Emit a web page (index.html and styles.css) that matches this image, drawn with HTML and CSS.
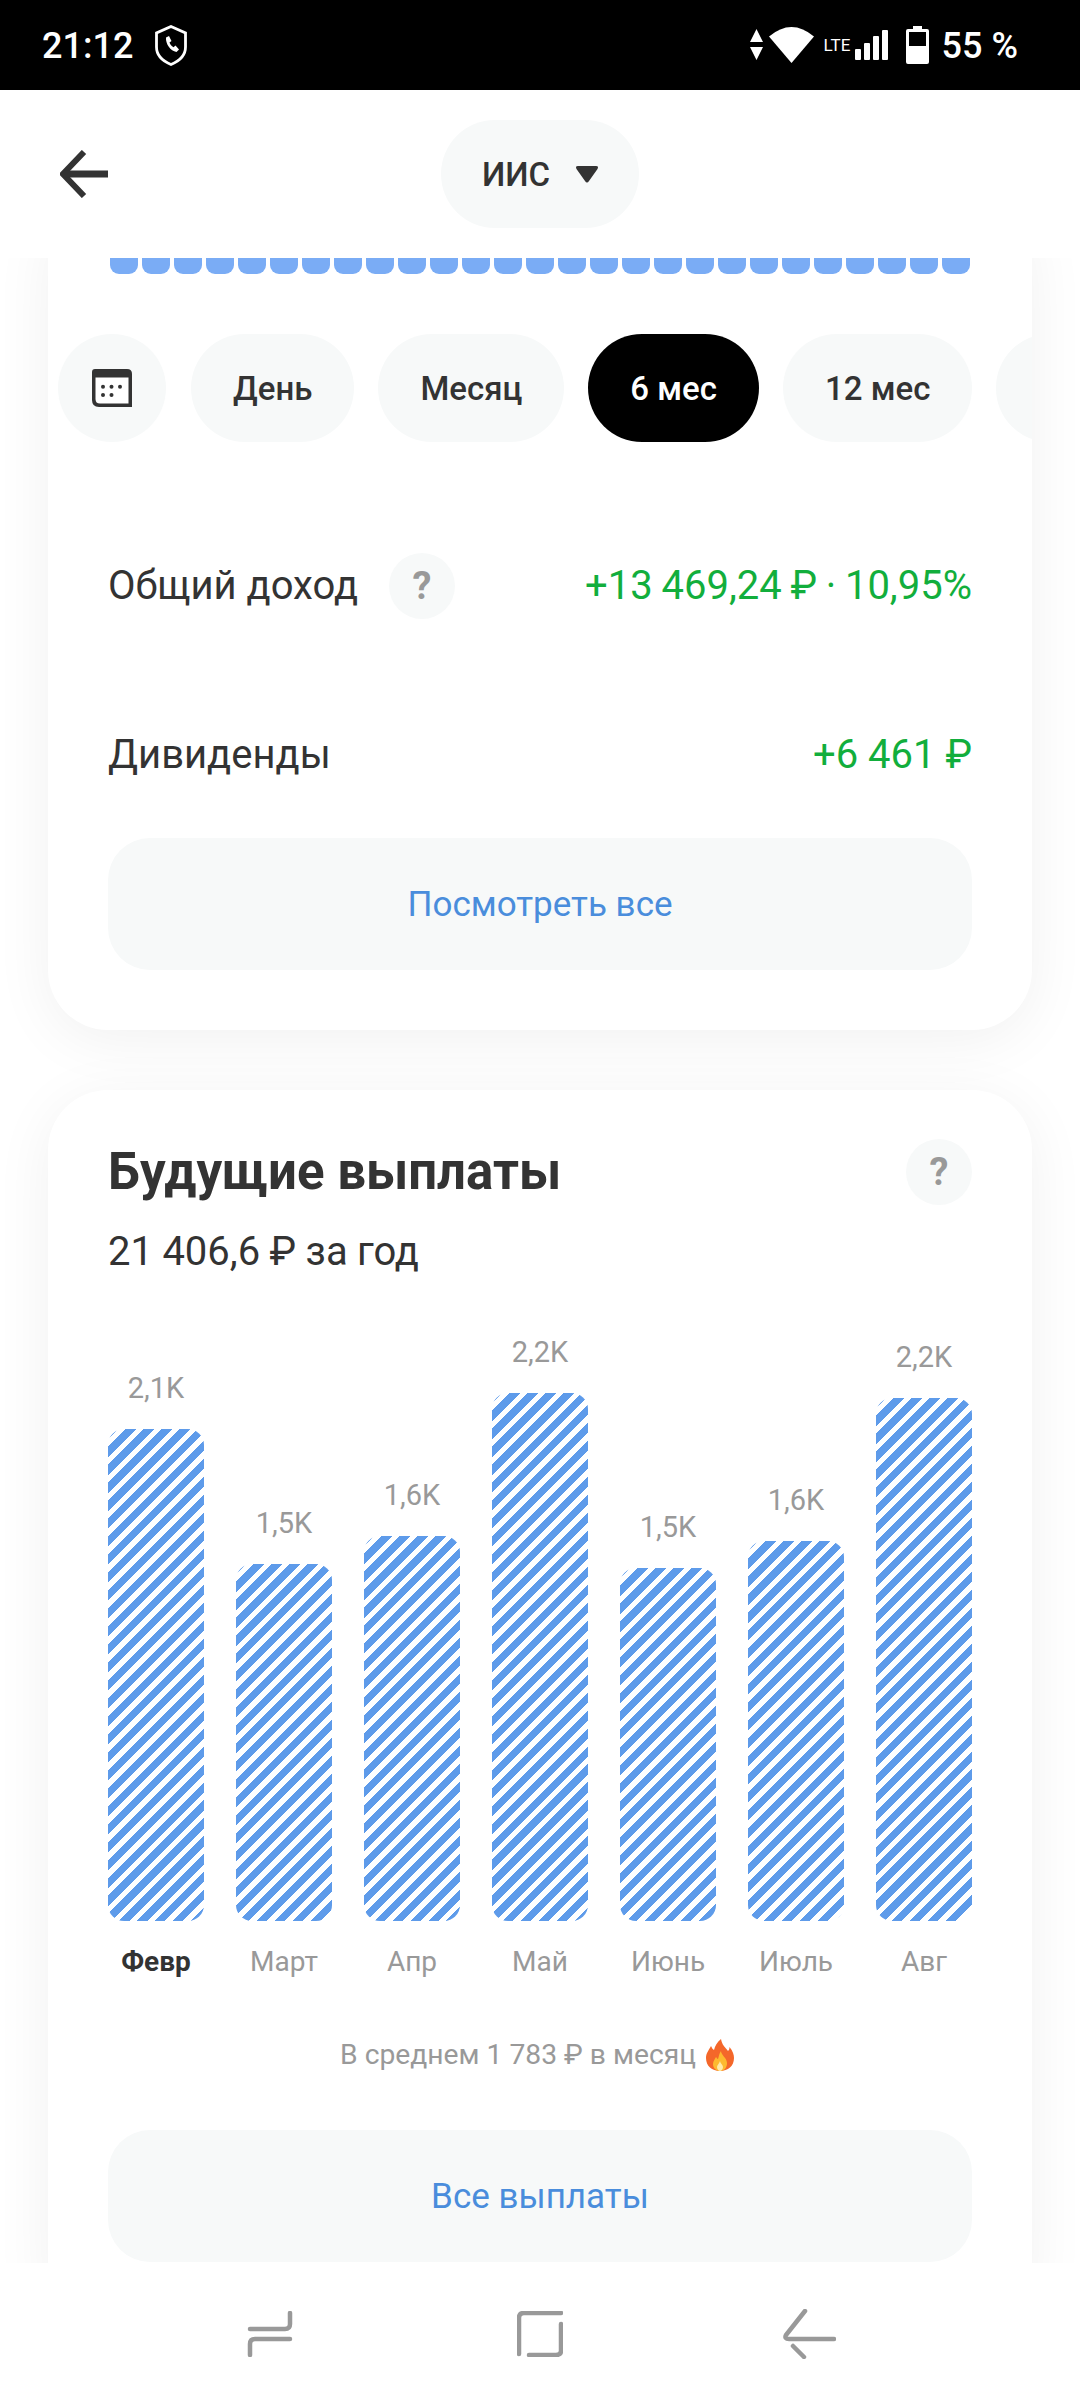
FILE: index.html
```html
<!DOCTYPE html>
<html lang="ru">
<head>
  <meta charset="UTF-8">
  <title>ИИС</title>
  <link rel="stylesheet" href="styles.css">
</head>
<body>
<div class="screen">

  <div class="status-bar">
    <div class="status-left">
      <span class="time">21:12</span>
      <svg class="shield" width="32" height="41" viewBox="0 0 32 41" fill="none" stroke="#fff">
        <path d="M16 1.500 30.500 8v14c0 8-6 14-14.500 17.500C7.500 36 1.500 30 1.500 22V8z" stroke-width="2.800"/>
        <path d="M11 12.500l3-1.500 2.500 5-2 1.500c.8 2 2 3.500 4 4.700l2-1.700 3.500 4-2.500 2.500c-6-1-11-8-10.500-14.500z" fill="#fff" stroke="none"/>
      </svg>
    </div>
    <div class="status-right">
      <svg width="13" height="32" viewBox="0 0 13 32" fill="#fff"><path d="M6.500 0 13 13H0zM0 18h13L6.500 31z"/></svg>
      <svg class="wifi" width="45" height="36" viewBox="0 0 45 36" fill="#fff"><path d="M0 9.500Q22.500-9.500 45 9.500L22.500 36z"/></svg>
      <span class="lte">LTE</span>
      <svg class="signal" width="33" height="30" viewBox="0 0 33 30" fill="#fff">
        <rect x="0" y="19" width="6" height="11" rx="1"/>
        <rect x="9" y="13" width="6" height="17" rx="1"/>
        <rect x="18" y="6" width="6" height="24" rx="1"/>
        <rect x="27" y="0" width="6" height="30" rx="1"/>
      </svg>
      <svg class="battery" width="23" height="38" viewBox="0 0 23 38">
        <path d="M7 0h9v3h5q2 0 2 2v31q0 2-2 2H2q-2 0-2-2V5q0-2 2-2h5z" fill="#fff"/>
        <rect x="3" y="6" width="17" height="14" fill="#000"/>
      </svg>
      <span class="percent">55 %</span>
    </div>
  </div>

  <header class="app-header">
    <svg class="back" width="48" height="48" viewBox="0 0 48 48" fill="none" stroke="#333">
      <path d="M24 2 3 24l21 22" stroke-width="6"/>
      <path d="M4 24h44" stroke-width="7"/>
    </svg>
    <button class="account-pill">
      <span>ИИС</span>
      <svg width="22" height="17" viewBox="0 0 22 17" fill="#333"><path d="M2 0h18q3 0 1.500 3L13 15q-2 3-4 0L.5 3Q-1 0 2 0z"/></svg>
    </button>
  </header>

  <main class="scroll">

    <section class="card card-income">
      <div class="ticks" id="ticks"></div>

      <div class="chips">
        <div class="chip chip-icon">
          <svg width="40" height="38" viewBox="0 0 40 38">
            <path d="M3 0h32q5 0 5 5v33H7q-7 0-7-7V3q0-3 3-3z" fill="#333"/>
            <path d="M3.500 8.500h33v26H8q-4.500 0-4.500-4.500z" fill="#fff"/>
            <g fill="#333">
              <circle cx="11" cy="17.700" r="2"/><circle cx="19.500" cy="17.700" r="2"/><circle cx="28" cy="17.700" r="2"/>
              <circle cx="11" cy="26" r="2"/><circle cx="19.500" cy="26" r="2"/>
            </g>
          </svg>
        </div>
        <div class="chip">День</div>
        <div class="chip">Месяц</div>
        <div class="chip chip-active">6 мес</div>
        <div class="chip">12 мес</div>
        <div class="chip chip-more"></div>
      </div>

      <div class="row row-total">
        <div class="row-label">
          <span>Общий доход</span>
          <span class="hint">?</span>
        </div>
        <span class="gain">+13 469,24 ₽ · 10,95%</span>
      </div>

      <div class="row row-dividends">
        <span>Дивиденды</span>
        <span class="gain">+6 461 ₽</span>
      </div>

      <button class="wide-btn">Посмотреть все</button>
    </section>

    <section class="card card-future">
      <div class="future-head">
        <h2>Будущие выплаты</h2>
        <span class="hint">?</span>
      </div>
      <p class="future-sum">21 406,6 ₽ за год</p>

      <div class="chart" id="chart"></div>

      <p class="average">
        В среднем 1 783 ₽ в месяц
        <svg class="fire" width="28" height="32" viewBox="0 0 28 32">
          <path d="M15 0c1 6 4 8 7 12 1-1 1.500-2 1.500-4C27 12 28 16 28 19c0 8-6 13-14 13S0 27 0 19c0-5 3-8 5-12 1 2 1.500 3 3 4C9 7 11 3 15 0z" fill="#f4672a"/>
          <path d="M15 12c0 4 6 7 6 12 0 5-3 8-7 8s-7-3-7-7c0-3 2-5 3-7 1 1 1 2 2 2 1-3 1-5 3-8z" fill="#fdb92e"/>
          <path d="M14 22c0 2 3 4 3 6 0 2-1.500 4-3 4s-3-2-3-4c0-2 2-3 3-6z" fill="#ffe9a8"/>
        </svg>
      </p>

      <button class="wide-btn">Все выплаты</button>
    </section>

  </main>

  <nav class="nav-bar">
    <svg width="46" height="46" viewBox="0 0 46 46" fill="none" stroke="#999" stroke-width="4.500" stroke-linecap="round">
      <path d="M43 2v11q0 5-5 5H3"/>
      <path d="M43 28H8q-5 0-5 5v11"/>
    </svg>
    <svg width="46" height="46" viewBox="0 0 46 46" fill="none" stroke="#999" stroke-width="4.500" stroke-linecap="round">
      <path d="M2 43V7q0-5 5-5h37"/>
      <path d="M44 13v27q0 4-5 4H12"/>
    </svg>
    <svg class="nav-back" width="54" height="50" viewBox="0 0 54 50" fill="none" stroke="#999" stroke-width="4.500" stroke-linecap="round">
      <path d="M23 2 4 26q-2 4 3 4h45"/>
      <path d="M11 37l11 11"/>
    </svg>
  </nav>

</div>

<script>
  // ticks of the chart above the period chips
  var ticks = document.getElementById("ticks");
  for (var i = 0; i < 27; i++) {
    ticks.appendChild(document.createElement("span"));
  }

  var months = [
    { name: "Февр", value: "2,1K", h: 492, current: true },
    { name: "Март", value: "1,5K", h: 357 },
    { name: "Апр", value: "1,6K", h: 385 },
    { name: "Май", value: "2,2K", h: 528 },
    { name: "Июнь", value: "1,5K", h: 353 },
    { name: "Июль", value: "1,6K", h: 380 },
    { name: "Авг", value: "2,2K", h: 523 }
  ];

  document.getElementById("chart").innerHTML = months.map(function (m) {
    return '<div class="col">' +
      '<span class="col-value">' + m.value + '</span>' +
      '<div class="col-bar" style="height:' + m.h + 'px"></div>' +
      '<span class="col-name' + (m.current ? ' col-current' : '') + '">' + m.name + '</span>' +
      '</div>';
  }).join("");
</script>
</body>
</html>
```

FILE: styles.css
```css
* {
  box-sizing: border-box;
}
html, body {
  margin: 0;
  padding: 0;
}
body {
  font-family: Roboto, "Noto Sans", sans-serif;
  color: #333;
  background: #fff;
}
button {
  font-family: inherit;
  border: none;
}
.screen {
  width: 1080px;
  height: 2408px;
  display: flex;
  flex-direction: column;
  overflow: hidden;
}

/* status bar */
.status-bar {
  height: 90px;
  flex: none;
  background: #000;
  color: #fff;
  display: flex;
  justify-content: space-between;
  align-items: center;
  padding: 0 62px 0 42px;
}
.status-left,
.status-right {
  display: flex;
  align-items: center;
}
.time {
  font-size: 36px;
  font-weight: 500;
  margin-top: 2px;
}
.shield {
  margin-left: 22px;
}
.wifi {
  margin-left: 6px;
}
.lte {
  font-size: 17px;
  margin-left: 10px;
  width: 31px;
}
.battery {
  margin-left: 18px;
}
.percent {
  font-size: 36px;
  font-weight: 500;
  margin: 2px 0 0 13px;
}

/* top bar */
.app-header {
  height: 168px;
  flex: none;
  background: #fff;
  display: grid;
  grid-template-columns: 1fr auto 1fr;
  align-items: center;
  padding: 0 60px;
  position: relative;
  z-index: 2;
}
.account-pill {
  height: 108px;
  padding: 0 41px;
  border-radius: 54px;
  background: #f7f9f9;
  color: #333;
  font-size: 33px;
  font-weight: 500;
  display: flex;
  align-items: center;
  gap: 26px;
}

/* scrolled content */
.scroll {
  flex: 1;
  min-height: 0;
  overflow: hidden;
  padding: 0 48px;
}
.card {
  background: #fff;
  border-radius: 60px;
  box-shadow: 0 10px 60px rgba(0, 0, 0, 0.06);
}
.card-income {
  margin-top: -60px;
  padding: 48px 60px 60px;
}
.card-future {
  margin-top: 60px;
  padding: 49px 60px 60px;
}

.ticks {
  display: flex;
  gap: 4px;
  height: 28px;
  padding-left: 2px;
}
.ticks span {
  width: 28px;
  flex: none;
  background: #7aacf5;
  border-radius: 0 0 9px 9px;
}

.chips {
  display: flex;
  gap: 24px;
  margin: 60px -60px 0;
  padding-left: 10px;
  overflow: hidden;
}
.chip {
  height: 108px;
  flex: none;
  padding: 0 42px;
  border-radius: 54px;
  background: #f7f9f9;
  font-size: 33px;
  font-weight: 500;
  display: flex;
  align-items: center;
}
.chip-icon {
  width: 108px;
  margin-right: 1px;
  padding: 0;
  justify-content: center;
}
.chip-active {
  background: #000;
  color: #fff;
}
.chip-more {
  width: 107px;
}

.row {
  display: flex;
  justify-content: space-between;
  align-items: center;
  height: 65px;
  font-size: 40px;
}
.row-total {
  margin-top: 111px;
}
.row-total .gain {
  word-spacing: -1.200px;
}
.row-dividends {
  margin-top: 104px;
}
.row-label {
  display: flex;
  align-items: center;
  gap: 31px;
}
.gain {
  color: #12ae3c;
}
.hint {
  width: 66px;
  height: 66px;
  flex: none;
  border-radius: 50%;
  background: #f7f9f9;
  color: #999;
  font-size: 38px;
  font-weight: 700;
  display: flex;
  align-items: center;
  justify-content: center;
}

.wide-btn {
  display: block;
  width: 100%;
  height: 132px;
  margin-top: 51px;
  border-radius: 42px;
  background: #f7f9f9;
  color: #4a8ddc;
  font-size: 35px;
}

.future-head {
  display: flex;
  justify-content: space-between;
  align-items: center;
  height: 65px;
}
.future-head h2 {
  margin: 0;
  font-size: 51px;
  font-weight: 700;
}
.future-sum {
  margin: 23px 0 0;
  font-size: 40px;
  line-height: 50px;
  word-spacing: -0.500px;
}

.chart {
  display: flex;
  justify-content: space-between;
  align-items: flex-end;
  margin-top: 55px;
}
.col {
  width: 96px;
  display: flex;
  flex-direction: column;
  align-items: center;
}
.col-value,
.col-name {
  font-size: 28px;
  line-height: 40px;
  color: #999;
  white-space: nowrap;
}
.col-value {
  font-size: 29px;
}
.col-bar {
  width: 100%;
  margin-top: 21px;
  border-radius: 16px;
  background: repeating-linear-gradient(135deg, #5e9bea 0, #5e9bea 7.200px, #fff 7.200px, #fff 12.700px);
}
.col-name {
  margin-top: 21px;
}
.col-current {
  color: #333;
  font-weight: 700;
}

.average {
  margin: 53px 0 0;
  padding-right: 6px;
  font-size: 28.250px;
  line-height: 40px;
  color: #999;
  display: flex;
  justify-content: center;
  align-items: center;
  gap: 10px;
}
.card-future .wide-btn {
  margin-top: 55px;
}

/* system navigation */
.nav-bar {
  height: 145px;
  flex: none;
  background: #fff;
  display: grid;
  grid-template-columns: repeat(3, 270px);
  justify-content: center;
  justify-items: center;
  align-items: center;
  position: relative;
  z-index: 2;
  padding-bottom: 4px;
}
.nav-back {
  margin-left: -2px;
}
```
